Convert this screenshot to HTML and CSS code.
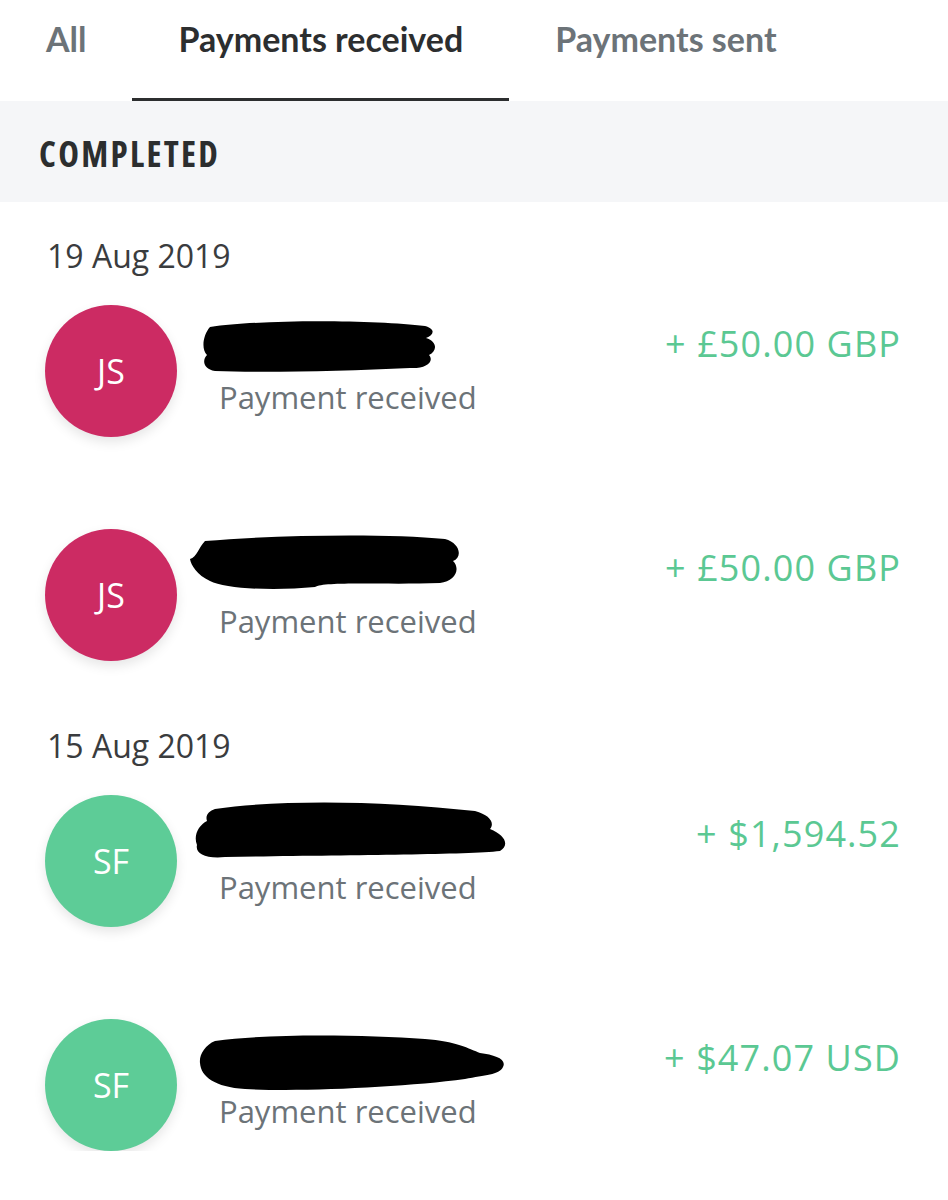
FILE: index.html
```html
<!DOCTYPE html>
<html lang="en">
<head>
<meta charset="utf-8">
<title>Activity</title>
<link rel="stylesheet" href="styles.css">
</head>
<body>
<nav class="tabs">
  <div class="tab">All</div>
  <div class="tab active">Payments received</div>
  <div class="tab">Payments sent</div>
</nav>
<div class="section-head">COMPLETED</div>
<div class="groups">
  <section class="group">
    <div class="date">19 Aug 2019</div>
    <div class="rows">
      <div class="row">
        <div class="avatar pink">JS</div>
        <div class="info">
          <svg class="redact" width="330" height="73" viewBox="0 0 330 73"><path d="M25,22 C80,14 190,15 240,21 C251,24 249,30 241,33 C253,37 252,46 244,50 C250,57 240,64 225,63 C160,66 80,68 30,66 C18,64 17,55 22,50 C16,44 18,30 25,22 Z"/></svg>
          <div class="sub">Payment received</div>
        </div>
        <div class="amount">+ £50.00 GBP</div>
      </div>
      <div class="row">
        <div class="avatar pink">JS</div>
        <div class="info">
          <svg class="redact" width="330" height="73" viewBox="0 0 330 73"><path d="M20,12 C90,6 200,4 260,10 C275,14 278,28 268,32 C276,40 270,52 255,54 C200,56 140,52 130,58 C90,62 40,60 25,52 C12,46 6,36 5,30 C12,28 14,18 20,12 Z"/></svg>
          <div class="sub">Payment received</div>
        </div>
        <div class="amount">+ £50.00 GBP</div>
      </div>
    </div>
  </section>
  <section class="group">
    <div class="date">15 Aug 2019</div>
    <div class="rows">
      <div class="row">
        <div class="avatar green">SF</div>
        <div class="info">
          <svg class="redact" width="330" height="73" viewBox="0 0 330 73"><path d="M30,14 C100,4 200,6 290,16 C305,20 310,28 305,34 C320,40 325,50 315,56 C280,60 150,60 40,62 C20,64 10,58 12,50 C8,40 14,30 22,26 C20,20 24,16 30,14 Z"/></svg>
          <div class="sub">Payment received</div>
        </div>
        <div class="amount">+ $1,594.52</div>
      </div>
      <div class="row">
        <div class="avatar green">SF</div>
        <div class="info">
          <svg class="redact" width="330" height="73" viewBox="0 0 330 73"><path d="M30,22 C90,14 180,16 240,20 C270,22 285,30 295,34 C310,36 322,40 318,48 C314,56 300,56 280,60 C220,68 120,73 60,70 C30,68 16,58 15,44 C14,36 20,26 30,22 Z"/></svg>
          <div class="sub">Payment received</div>
        </div>
        <div class="amount">+ $47.07 USD</div>
      </div>
    </div>
  </section>
</div>
</body>
</html>
```

FILE: styles.css
```css
* { box-sizing: border-box; }
html, body { margin: 0; padding: 0; background: #ffffff; }
body {
  width: 948px;
  font-family: "Open Sans", "Noto Sans", sans-serif;
  color: #2c2e2f;
}
.tabs {
  display: flex;
  height: 101px;
  background: #ffffff;
}
.tab {
  height: 101px;
  padding: 19px 46px 0;
  font-family: Lato, "Open Sans", sans-serif;
  font-weight: 700;
  font-size: 34px;
  line-height: 40px;
  color: #6c7378;
  border-bottom: 3px solid transparent;
  white-space: nowrap;
}
.tab.active {
  color: #2c2e2f;
  border-bottom-color: #2c2e2f;
}
.section-head {
  height: 101px;
  background: #f5f6f8;
  padding: 33px 0 0 39px;
  font-family: "Open Sans", sans-serif;
  font-stretch: 87%;
  font-weight: 700;
  font-size: 35px;
  line-height: 40px;
  letter-spacing: 2.3px;
  color: #2c2e2f;
}
.groups {
  display: flex;
  flex-direction: column;
  gap: 66px;
  padding-top: 35px;
}
.group {
  display: flex;
  flex-direction: column;
  gap: 30px;
}
.date {
  padding-left: 47px;
  font-size: 32px;
  line-height: 38px;
  color: #3a3c3e;
}
.rows {
  display: flex;
  flex-direction: column;
  gap: 92px;
}
.row {
  display: flex;
  align-items: flex-start;
  padding: 0 47px 0 45px;
}
.avatar {
  flex: 0 0 132px;
  width: 132px;
  height: 132px;
  border-radius: 50%;
  display: flex;
  align-items: center;
  justify-content: center;
  color: #ffffff;
  font-size: 34px;
  line-height: 1;
  box-shadow: 0 5px 12px rgba(0, 0, 0, 0.10);
}
.avatar.pink { background: #cc2b63; }
.avatar.green { background: #5dcc97; }
.info {
  margin-left: 42px;
  display: flex;
  flex-direction: column;
}
.redact {
  display: block;
  margin-left: -34px;
  fill: #000000;
}
.sub {
  font-size: 31px;
  line-height: 38px;
  color: #6c7378;
  white-space: nowrap;
}
.amount {
  margin-left: auto;
  margin-top: 18px;
  font-size: 36px;
  line-height: 42px;
  letter-spacing: 1.1px;
  color: #5bc893;
  white-space: nowrap;
}
```
